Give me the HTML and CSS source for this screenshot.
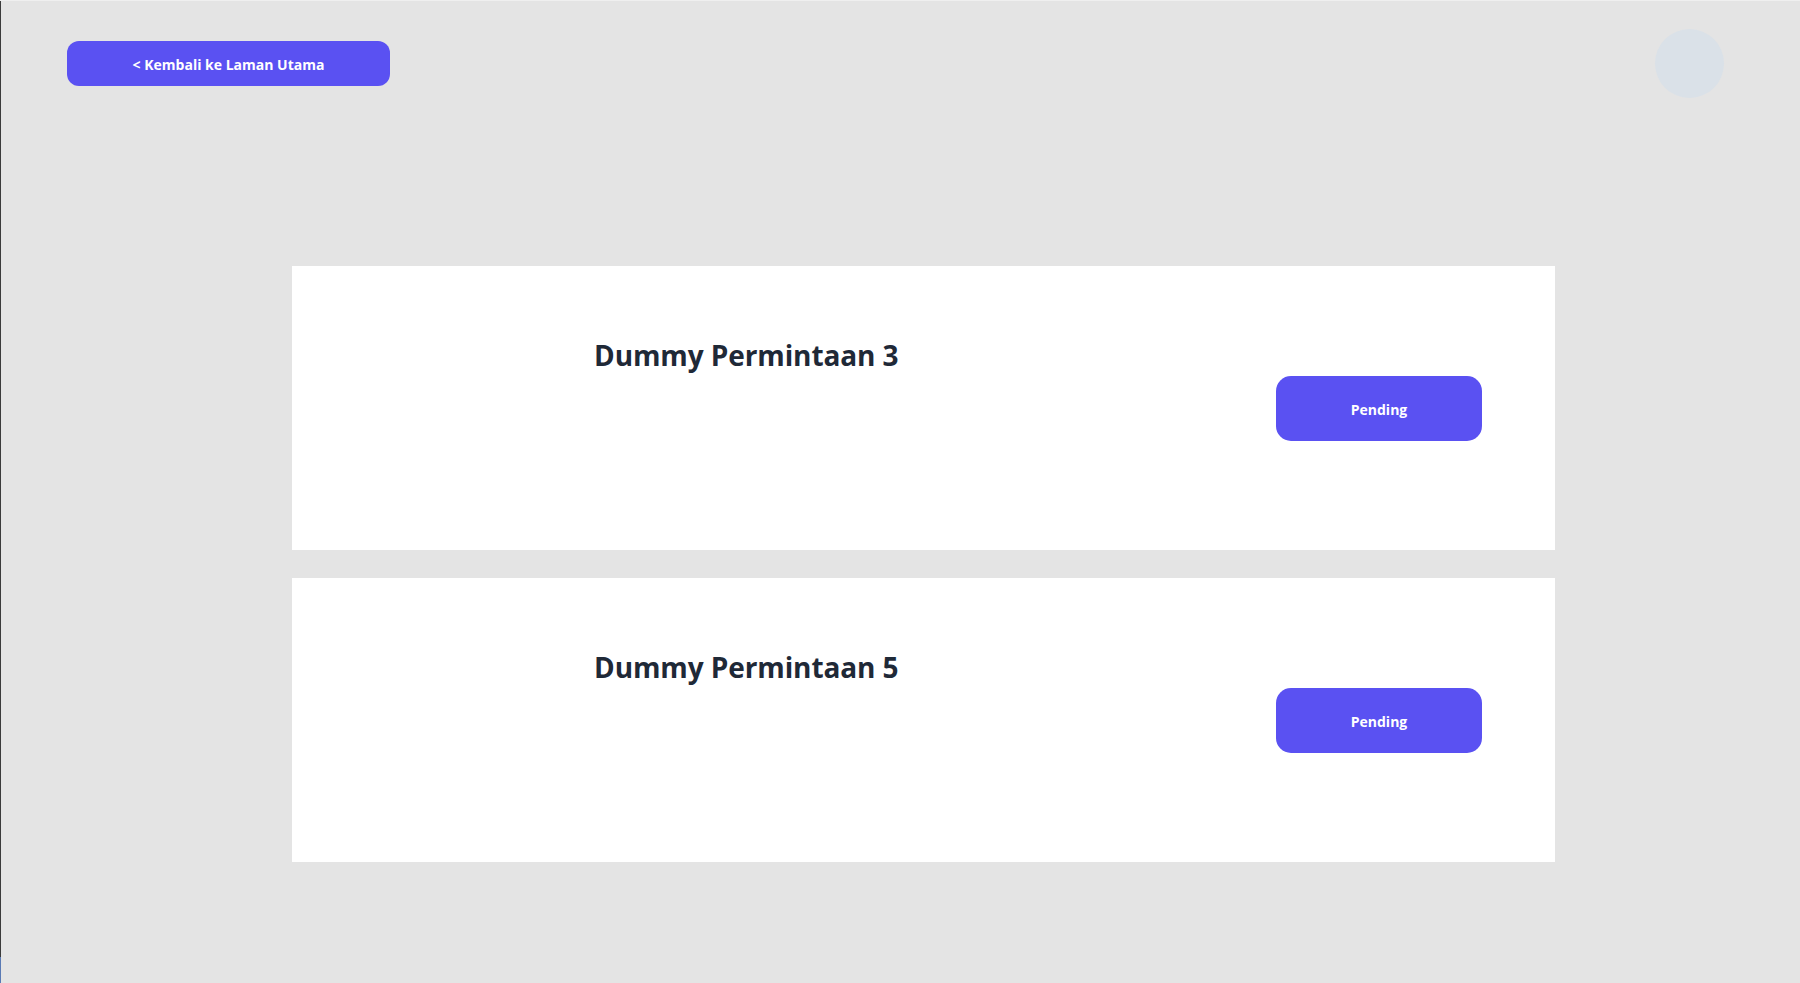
FILE: index.html
```html
<!DOCTYPE html>
<html lang="id">
<head>
<meta charset="utf-8">
<title>Permintaan</title>
<link rel="stylesheet" href="styles.css">
</head>
<body>
<div class="page">
  <header class="topbar">
    <button class="back-btn">&lt; Kembali ke Laman Utama</button>
    <div class="avatar"></div>
  </header>
  <main class="list">
    <section class="card">
      <h2 class="card-title">Dummy Permintaan 3</h2>
      <button class="status-btn">Pending</button>
    </section>
    <section class="card">
      <h2 class="card-title">Dummy Permintaan 5</h2>
      <button class="status-btn">Pending</button>
    </section>
  </main>
</div>
</body>
</html>
```
FILE: styles.css
```css
html, body {
  margin: 0;
  padding: 0;
}
body {
  background: #e4e4e4;
  font-family: "Open Sans", "Noto Sans", sans-serif;
  overflow: hidden;
}
.page {
  height: 100vh;
  box-sizing: border-box;
  border-top: 1px solid #efefef;
  padding-left: 1px;
  background:
    linear-gradient(to bottom, #3b3b3b 956px, #5a7ab4 956px) left top / 1px 100% no-repeat,
    #e4e4e4;
}
.topbar {
  display: flex;
  align-items: center;
  justify-content: space-between;
  padding: 28px 76px 0 66px;
}
.back-btn {
  width: 323px;
  height: 45px;
  border: none;
  border-radius: 12px;
  background: #5a51f2;
  color: #ffffff;
  font-family: "Open Sans", sans-serif;
  font-weight: 700;
  font-size: 14px;
  padding: 2px 0 0 0;
}
.avatar {
  width: 69px;
  height: 69px;
  border-radius: 50%;
  background: #dae1e8;
}
.list {
  display: flex;
  flex-direction: column;
  gap: 28px;
  margin: 168px 0 0 291px;
  width: 1263px;
}
.card {
  height: 284px;
  box-sizing: border-box;
  background: #ffffff;
  display: flex;
  align-items: center;
  justify-content: space-between;
  padding: 0 73px 0 302px;
}
.card-title {
  align-self: flex-start;
  margin: 73px 0 0 0;
  font-size: 28px;
  line-height: 1.2;
  font-weight: 700;
  color: #1f2937;
  letter-spacing: -0.1px;
}
.status-btn {
  width: 206px;
  height: 65px;
  border: none;
  border-radius: 15px;
  background: #5a51f2;
  color: #ffffff;
  font-family: "Open Sans", sans-serif;
  font-weight: 700;
  font-size: 14px;
  padding: 2px 0 0 0;
}
```
